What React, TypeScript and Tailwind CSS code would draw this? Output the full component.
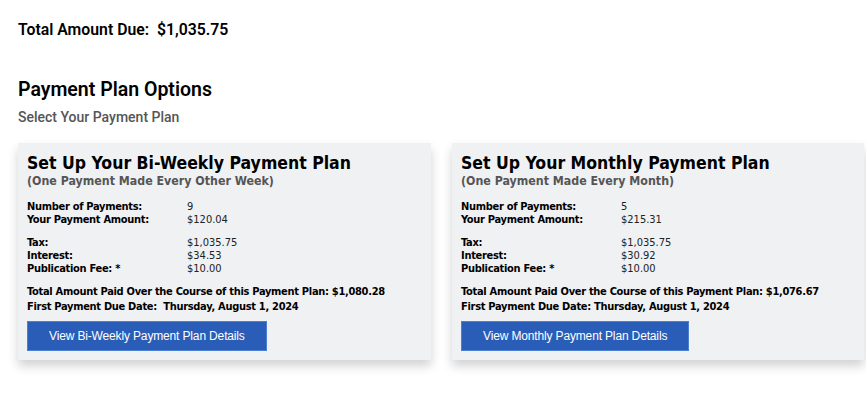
import React from "react";

type Plan = {
  title: string;
  sub: string;
  count: string;
  amount: string;
  tax: string;
  interest: string;
  fee: string;
  total: string;
  due: string;
  button: string;
  width: string;
};

const plans: Plan[] = [
  {
    title: "Set Up Your Bi-Weekly Payment Plan",
    sub: "(One Payment Made Every Other Week)",
    count: "9",
    amount: "$120.04",
    tax: "$1,035.75",
    interest: "$34.53",
    fee: "$10.00",
    total: "$1,080.28",
    due: "\u00a0Thursday, August 1, 2024",
    button: "View Bi-Weekly Payment Plan Details",
    width: "w-[413px]",
  },
  {
    title: "Set Up Your Monthly Payment Plan",
    sub: "(One Payment Made Every Month)",
    count: "5",
    amount: "$215.31",
    tax: "$1,035.75",
    interest: "$30.92",
    fee: "$10.00",
    total: "$1,076.67",
    due: "Thursday, August 1, 2024",
    button: "View Monthly Payment Plan Details",
    width: "w-[412px]",
  },
];

function Row({ label, value }: { label: string; value: string }) {
  return (
    <div className="flex h-[13px] items-center">
      <div className="w-[160px] font-bold tracking-[-0.3px] text-black">{label}</div>
      <div className="text-[#222]">{value}</div>
    </div>
  );
}

function Card({ p }: { p: Plan }) {
  return (
    <div
      className={`${p.width} bg-[#f0f1f3] px-[9px] pt-[9px] pb-[9px] shadow-[0_6px_10px_rgba(0,0,0,0.18)] font-['DejaVu_Sans_Condensed','DejaVu_Sans',sans-serif]`}
    >
      <div className="whitespace-nowrap text-[17.5px] font-bold leading-[22px] text-black">{p.title}</div>
      <div className="whitespace-nowrap text-[12.3px] font-bold leading-[15px] text-[#555]">{p.sub}</div>
      <div className="mt-[12px] text-[11px]">
        <Row label="Number of Payments:" value={p.count} />
        <Row label="Your Payment Amount:" value={p.amount} />
        <div className="h-[10px]" />
        <Row label="Tax:" value={p.tax} />
        <Row label="Interest:" value={p.interest} />
        <Row label="Publication Fee: *" value={p.fee} />
      </div>
      <div className="mt-[8px] whitespace-nowrap text-[11px] font-bold leading-[15px] tracking-[-0.3px] text-black">
        <div>Total Amount Paid Over the Course of this Payment Plan: {p.total}</div>
        <div>First Payment Due Date: {p.due}</div>
      </div>
      <button className="mt-[7px] flex h-[30px] items-center border border-[#4d7fd0] bg-[#2a5db8] px-[21px] text-[12px] text-white font-['Liberation_Sans',Arial,sans-serif] tracking-[-0.15px]">
        {p.button}
      </button>
    </div>
  );
}

export default function App() {
  return (
    <div className="h-[415px] w-[866px] overflow-hidden bg-white pl-[18px] font-['Roboto',sans-serif]">
      <div className="pt-[20px] text-[15.8px] font-semibold leading-[20px] text-black">
        Total Amount Due:&nbsp; $1,035.75
      </div>
      <div className="mt-[37px] text-[19.5px] font-semibold leading-[26px] text-black">Payment Plan Options</div>
      <div className="mt-[5px] text-[14px] font-medium leading-[18px] text-[#555]">Select Your Payment Plan</div>
      <div className="mt-[17px] flex gap-[21px]">
        {plans.map((p) => (
          <Card key={p.title} p={p} />
        ))}
      </div>
    </div>
  );
}
